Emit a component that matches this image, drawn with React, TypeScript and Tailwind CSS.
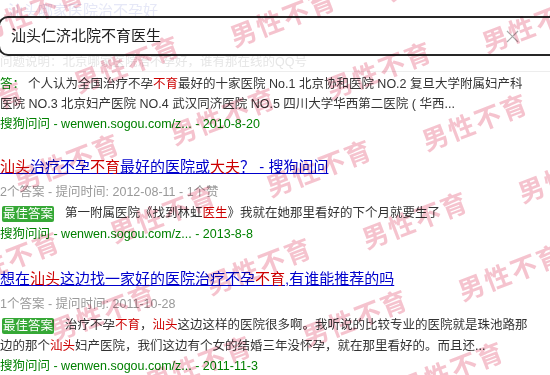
import React from "react";

const R = ({ children }: { children: React.ReactNode }) => (
  <span className="text-[#cc0000]">{children}</span>
);

const Badge = () => (
  <span className="inline-block ml-[2px] mr-[11px] px-[1px] h-[16px] leading-[16px] rounded-[2px] bg-[#36a836] text-white text-[12.5px] align-middle">
    最佳答案
  </span>
);

const Source = ({ date }: { date: string }) => (
  <div className="leading-[21px] h-[21px] text-[#008000] whitespace-nowrap">
    搜狗问问 - wenwen.sogou.com/z... - {date}
  </div>
);

export default function App() {
  const marks: { x: number; y: number }[] = [];
  for (let a = -3; a <= 3; a++) {
    for (let b = -3; b <= 9; b++) {
      const x = 127 + a * 252 + b * 96;
      const y = 63 + a * 6 + b * 52;
      if (x > -70 && x < 620 && y > -30 && y < 410) marks.push({ x, y });
    }
  }

  return (
    <div className="relative w-[550px] h-[375px] overflow-hidden bg-white font-['Liberation_Sans','Noto_Sans_CJK_SC',sans-serif]">
      {/* header with search overlay */}
      <div className="relative h-[72px] border-b border-[#ededed]">
        <div className="pl-[8px] pt-[2px] text-[15px] leading-[18px] text-[#e6e8f7] whitespace-nowrap">
          汕头哪家医院治不孕好
        </div>
        <div className="mt-[34px] text-[12.5px] leading-[16px] text-[#e6e6e6] whitespace-nowrap">
          问题说明：北京哪家医院治不孕好，谁有那在线的QQ号
        </div>
        <div className="absolute left-[-2px] top-[16px] w-[580px] h-[40px] rounded-[10px] border-2 border-[#262626] bg-white flex items-center pl-[11px]">
          <span className="text-[15px] text-[#222] whitespace-nowrap">汕头仁济北院不育医生</span>
        </div>
        <svg
          className="absolute left-[506px] top-[30px]"
          width="13"
          height="13"
          viewBox="0 0 13 13"
        >
          <path d="M1 1 L12 12 M12 1 L1 12" stroke="#a8a8a8" strokeWidth="1.2" fill="none" />
        </svg>
      </div>

      {/* results */}
      <div className="pt-[2px] text-[12.5px] text-[#333]">
        <div className="leading-[20px] h-[20px] whitespace-nowrap">
          <span className="text-[#008000]">答：</span>
          <span className="ml-[3px]">
            个人认为全国治疗不孕<R>不育</R>最好的十家医院 No.1 北京协和医院 NO.2 复旦大学附属妇产科
          </span>
        </div>
        <div className="leading-[20px] h-[20px] whitespace-nowrap">
          医院 NO.3 北京妇产医院 NO.4 武汉同济医院 NO.5 四川大学华西第二医院 ( 华西...
        </div>
        <Source date="2010-8-20" />

        <div className="mt-[21px]">
          <div className="text-[15px] leading-[21px] h-[21px] text-[#0000cc] underline whitespace-nowrap">
            <R>汕头</R>治疗不孕<R>不育</R>最好的医院或<R>大夫</R>？ - 搜狗问问
          </div>
          <div className="mt-[5px] leading-[21px] h-[21px] text-[#999] whitespace-nowrap">
            2个答案 - 提问时间: 2012-08-11 - 1个赞
          </div>
          <div className="leading-[21px] h-[21px] whitespace-nowrap">
            <Badge />
            第一附属医院《找到林虹<R>医生</R>》我就在她那里看好的下个月就要生了
          </div>
          <Source date="2013-8-8" />
        </div>

        <div className="mt-[23px]">
          <div className="text-[15px] leading-[21px] h-[21px] text-[#0000cc] underline whitespace-nowrap">
            想在<R>汕头</R>这边找一家好的医院治疗不孕<R>不育</R>,有谁能推荐的吗
          </div>
          <div className="mt-[5px] leading-[21px] h-[21px] text-[#999] whitespace-nowrap">
            1个答案 - 提问时间: 2011-10-28
          </div>
          <div className="leading-[21px] h-[21px] whitespace-nowrap">
            <Badge />
            治疗不孕<R>不育</R>，<R>汕头</R>这边这样的医院很多啊。我听说的比较专业的医院就是珠池路那
          </div>
          <div className="leading-[20px] h-[20px] whitespace-nowrap">
            边的那个<R>汕头</R>妇产医院，我们这边有个女的结婚三年没怀孕，就在那里看好的。而且还...
          </div>
          <Source date="2011-11-3" />
        </div>
      </div>

      {/* watermark */}
      <div className="pointer-events-none absolute inset-0">
        {marks.map((m, i) => (
          <span
            key={i}
            className="absolute whitespace-nowrap font-bold text-[26px] leading-none tracking-[2px] text-[#f5c3ce] mix-blend-multiply font-['Noto_Sans_CJK_SC',sans-serif]"
            style={{
              left: m.x,
              top: m.y,
              transform: "translate(-50%, -50%) rotate(-21deg)",
            }}
          >
            男性不育
          </span>
        ))}
      </div>
    </div>
  );
}
